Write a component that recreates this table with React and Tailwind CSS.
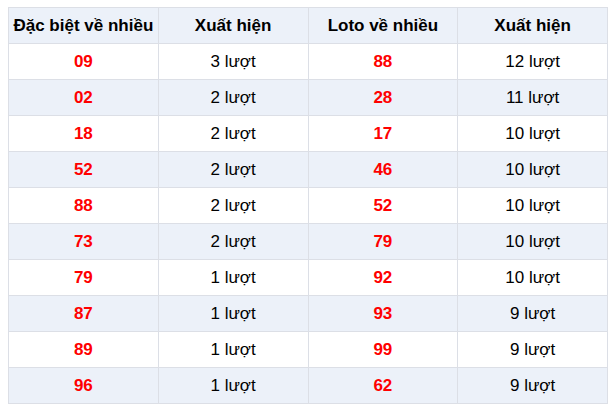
export default function App() {
  const rows = [
    ["09", "3 lượt", "88", "12 lượt"],
    ["02", "2 lượt", "28", "11 lượt"],
    ["18", "2 lượt", "17", "10 lượt"],
    ["52", "2 lượt", "46", "10 lượt"],
    ["88", "2 lượt", "52", "10 lượt"],
    ["73", "2 lượt", "79", "10 lượt"],
    ["79", "1 lượt", "92", "10 lượt"],
    ["87", "1 lượt", "93", "9 lượt"],
    ["89", "1 lượt", "99", "9 lượt"],
    ["96", "1 lượt", "62", "9 lượt"],
  ];
  const cell = "border border-[#dcdfe6] text-center align-middle p-0 h-[36px]";
  return (
    <div className="bg-white w-[615px] h-[413px] pt-[7px] pl-[8px]" style={{ fontFamily: '"Liberation Sans", Arial, sans-serif' }}>
      <table className="border-collapse table-fixed w-[600px] text-[17px] text-black">
        <thead>
          <tr className="bg-[#ecf1f9]">
            <th className={cell + " font-bold"}>Đặc biệt về nhiều</th>
            <th className={cell + " font-bold"}>Xuất hiện</th>
            <th className={cell + " font-bold"}>Loto về nhiều</th>
            <th className={cell + " font-bold"}>Xuất hiện</th>
          </tr>
        </thead>
        <tbody>
          {rows.map((r, i) => (
            <tr key={i} className={i % 2 === 1 ? "bg-[#ecf1f9]" : "bg-white"}>
              <td className={cell + " font-bold text-[#ff0000]"}>{r[0]}</td>
              <td className={cell}>{r[1]}</td>
              <td className={cell + " font-bold text-[#ff0000]"}>{r[2]}</td>
              <td className={cell}>{r[3]}</td>
            </tr>
          ))}
        </tbody>
      </table>
    </div>
  );
}
